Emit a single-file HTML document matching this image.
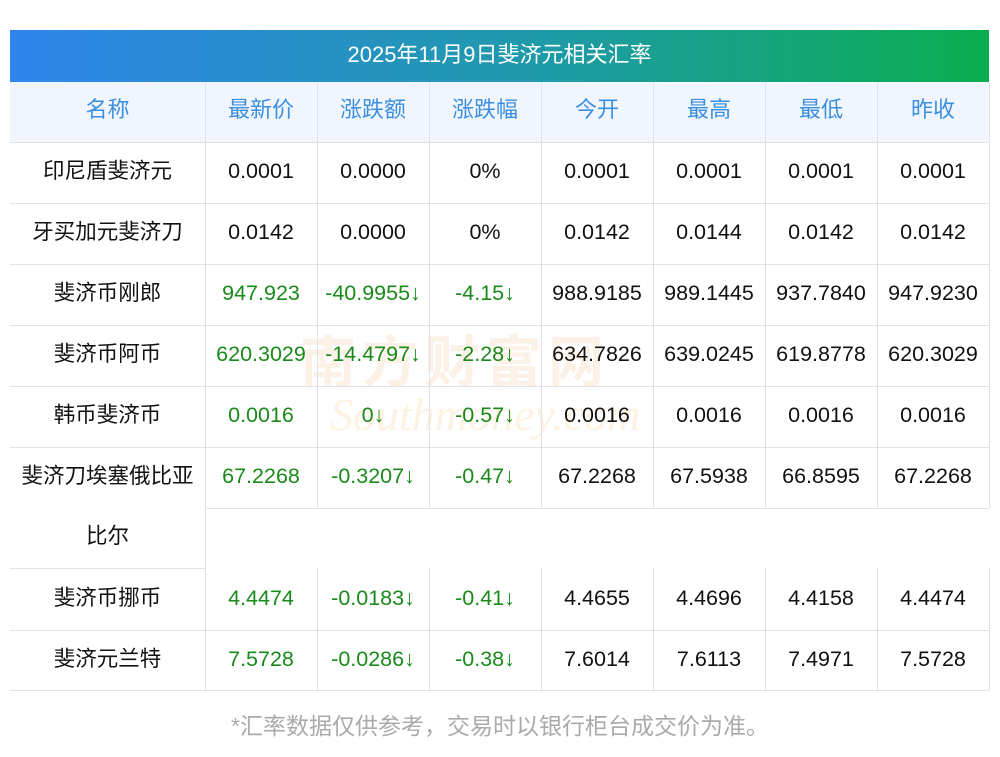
<!DOCTYPE html>
<html><head><meta charset="utf-8"><style>
body{margin:0;width:1000px;height:757px;background:#fff;position:relative;font-family:"Liberation Sans","Noto Sans CJK SC",sans-serif;overflow:hidden}
.t{position:absolute;left:10px;top:30px;width:979px;height:52px;background:linear-gradient(90deg,#2f86ec,#1f9aa8 55%,#0aae4f);color:#fff;font-size:22px;text-align:center;line-height:50px}
.hd{position:absolute;left:10px;top:82px;width:979px;height:60px;background:#f1f6fe}
.c{position:absolute;text-align:center;font-size:21.5px;color:#111;line-height:22px;white-space:nowrap}
.h{color:#3b8fe0;font-size:22px}
.g{color:#1a8a1a}
.hl{position:absolute;height:1px;background:#e0e2ea}
.vl{position:absolute;width:1px;background:#e0e2ea}
.f{position:absolute;left:0;width:1000px;top:707px;text-align:center;font-size:23px;color:#aaa}
.wm{position:absolute;left:300px;top:318px;font-size:56px;color:rgba(240,180,120,0.18);font-weight:bold;letter-spacing:6px}
.wm2{position:absolute;left:330px;top:388px;font-size:46px;color:rgba(250,190,110,0.2);font-style:italic;font-family:"Liberation Serif",serif}
</style></head><body>
<div class="t">2025年11月9日斐济元相关汇率</div>
<div class="hd"></div>
<div class="wm">南方财富网</div>
<div class="wm2">Southmoney.com</div>
<div id="g"></div>
<div class="f">*汇率数据仅供参考，交易时以银行柜台成交价为准。</div>
<script>
var xs=[10,205,317,429,541,653,765,877,989];
var h=["名称","最新价","涨跌额","涨跌幅","今开","最高","最低","昨收"];
var rows=[
["印尼盾斐济元","0.0001","0.0000","0%","0.0001","0.0001","0.0001","0.0001",0,142],
["牙买加元斐济刀","0.0142","0.0000","0%","0.0142","0.0144","0.0142","0.0142",0,203],
["斐济币刚郎","947.923","-40.9955↓","-4.15↓","988.9185","989.1445","937.7840","947.9230",1,264],
["斐济币阿币","620.3029","-14.4797↓","-2.28↓","634.7826","639.0245","619.8778","620.3029",1,325],
["韩币斐济币","0.0016","0↓","-0.57↓","0.0016","0.0016","0.0016","0.0016",1,386],
["斐济刀埃塞俄比亚","67.2268","-0.3207↓","-0.47↓","67.2268","67.5938","66.8595","67.2268",1,447],
["斐济币挪币","4.4474","-0.0183↓","-0.41↓","4.4655","4.4696","4.4158","4.4474",1,569],
["斐济元兰特","7.5728","-0.0286↓","-0.38↓","7.6014","7.6113","7.4971","7.5728",1,630]];
var s="";
function cell(x,y,w,t,cls){s+='<div class="c '+cls+'" style="left:'+x+'px;top:'+y+'px;width:'+w+'px">'+t+'</div>';}
for(var i=0;i<8;i++)cell(xs[i],99,xs[i+1]-xs[i],h[i],"h");
rows.forEach(function(r){var y=r[9]+18;for(var i=0;i<8;i++){cell(xs[i],y,xs[i+1]-xs[i],r[i],(r[8]&&i>0&&i<4)?"g":"");}});
cell(10,525,195,"比尔","");
[142,203,264,325,386,447,630,690].forEach(function(y){s+='<div class="hl" style="left:10px;width:979px;top:'+y+'px"></div>';});
s+='<div class="hl" style="left:205px;width:784px;top:508px"></div>';
s+='<div class="hl" style="left:10px;width:195px;top:568px"></div>';
for(var i=1;i<9;i++){if(i==1){s+='<div class="vl" style="left:205px;top:82px;height:608px"></div>';}else{s+='<div class="vl" style="left:'+xs[i]+'px;top:82px;height:426px"></div><div class="vl" style="left:'+xs[i]+'px;top:569px;height:121px"></div>';}}
document.getElementById("g").innerHTML=s;
</script>
</body></html>
